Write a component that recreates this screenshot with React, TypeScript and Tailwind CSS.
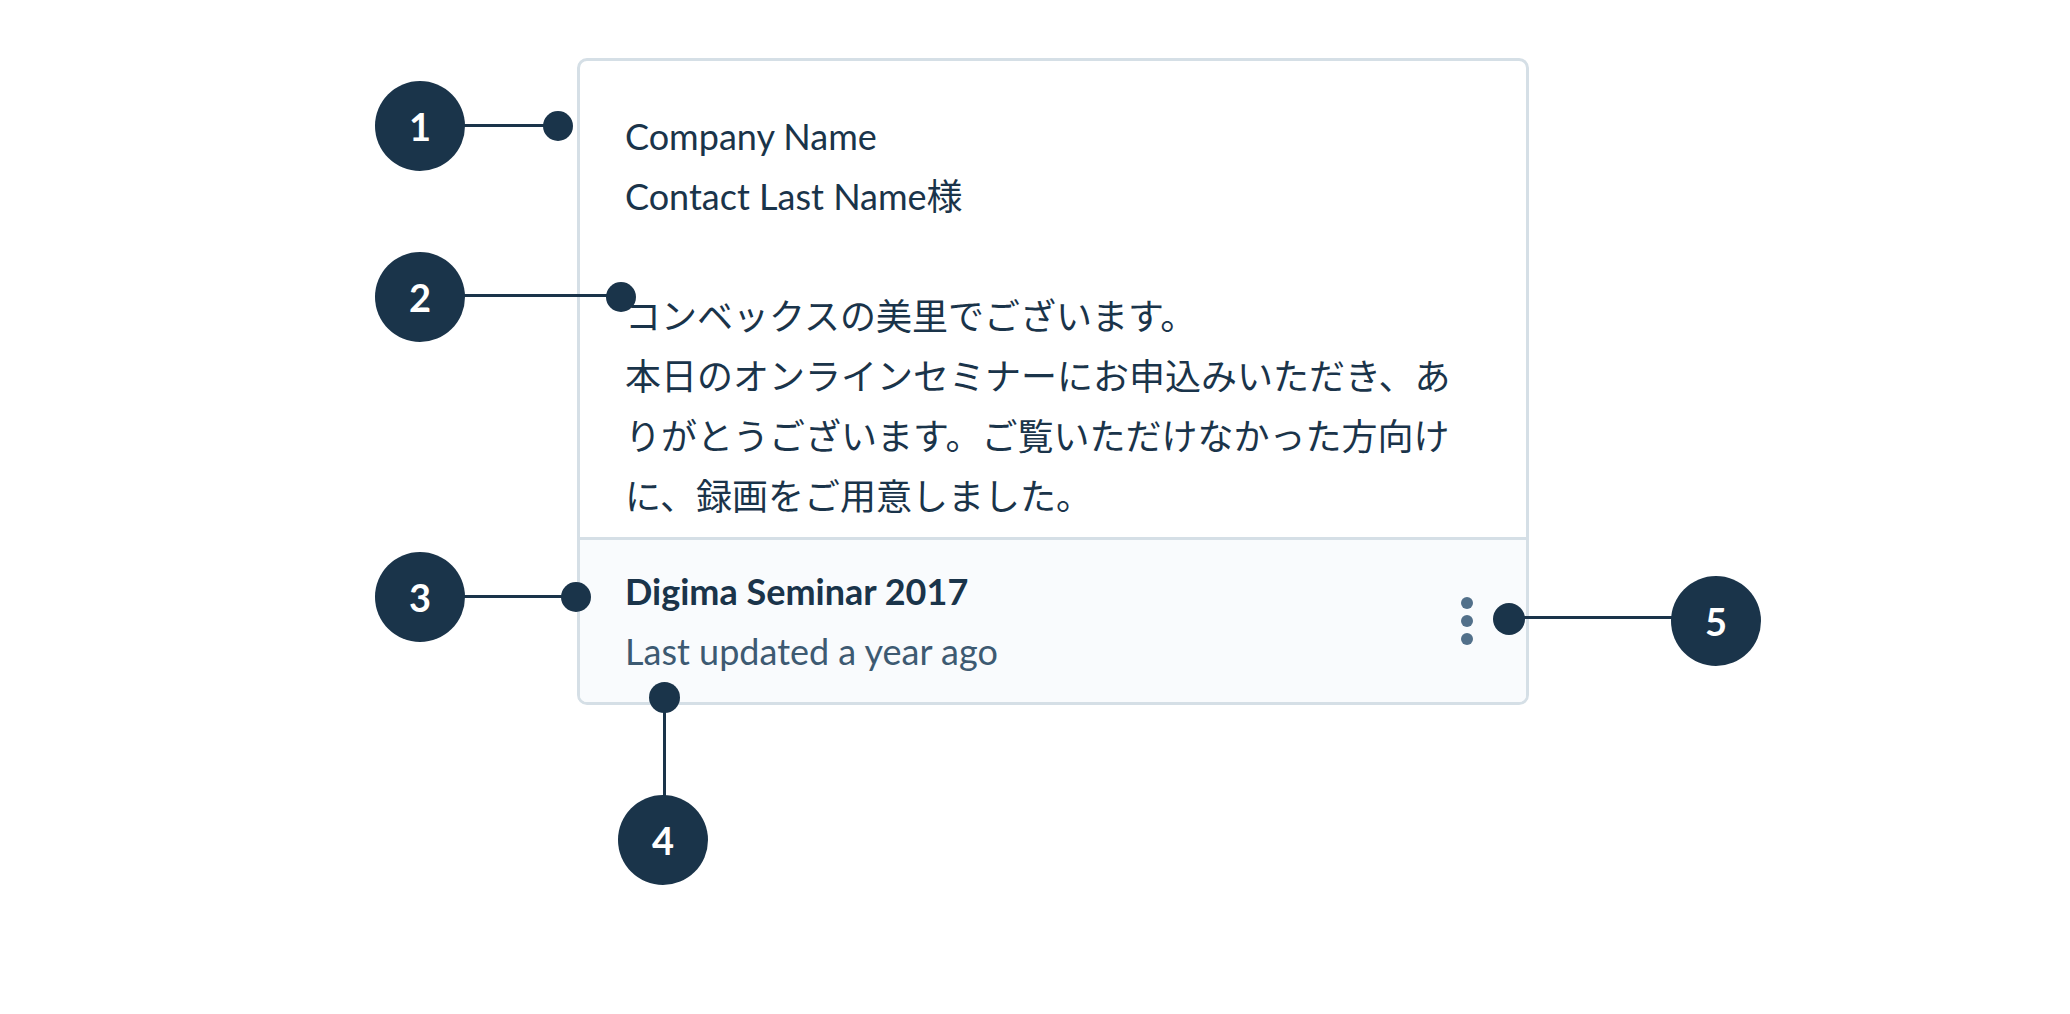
import React from "react";

function Badge({ n, x, y }: { n: number; x: number; y: number }) {
  return (
    <div
      className="absolute w-[90px] h-[90px] rounded-full bg-[#1a344a] text-white flex items-center justify-center text-[38px] font-bold font-['Lato'] leading-none"
      style={{ left: x - 45, top: y - 45 }}
    >
      {n}
    </div>
  );
}

function Dot({ x, y, d = 30 }: { x: number; y: number; d?: number }) {
  return (
    <div
      className="absolute rounded-full bg-[#1a344a]"
      style={{ left: x - d / 2, top: y - d / 2, width: d, height: d }}
    />
  );
}

function HLine({ x1, x2, y }: { x1: number; x2: number; y: number }) {
  return (
    <div
      className="absolute h-[3px] bg-[#1a344a]"
      style={{ left: x1, width: x2 - x1, top: y - 1.5 }}
    />
  );
}

function VLine({ y1, y2, x }: { y1: number; y2: number; x: number }) {
  return (
    <div
      className="absolute w-[3px] bg-[#1a344a]"
      style={{ top: y1, height: y2 - y1, left: x - 1.5 }}
    />
  );
}

export default function App() {
  return (
    <div className="relative w-[2070px] h-[1014px] bg-white font-['Lato','Noto_Sans_CJK_JP',sans-serif] overflow-hidden">
      <div className="pt-[58px] pl-[577px]">
        <div className="w-[952px] rounded-[10px] border-[3px] border-[#d5dfe6] overflow-hidden">
          <div className="pt-[45px] pb-[11px] px-[45px] text-[36px] leading-[60px] text-[#1a344a] font-['Lato','Noto_Sans_CJK_JP',sans-serif] whitespace-nowrap">
            Company Name
            <br />
            Contact Last Name様
            <br />
            <br />
            コンベックスの美里でございます。
            <br />
            本日のオンラインセミナーにお申込みいただき、あ
            <br />
            りがとうございます。ご覧いただけなかった方向け
            <br />
            に、録画をご用意しました。
          </div>
          <div className="border-t-[3px] border-[#d5dfe6] bg-[#f9fbfd] flex items-center pl-[45px] pr-[53px] py-[21px]">
            <div className="text-[36px] leading-[60px]">
              <div className="font-bold text-[#1a344a]">Digima Seminar 2017</div>
              <div className="text-[#3d5a72]">Last updated a year ago</div>
            </div>
            <div className="ml-auto flex flex-col gap-[6px]">
              <div className="w-[12px] h-[12px] rounded-full bg-[#52708a]" />
              <div className="w-[12px] h-[12px] rounded-full bg-[#52708a]" />
              <div className="w-[12px] h-[12px] rounded-full bg-[#52708a]" />
            </div>
          </div>
        </div>
      </div>

      {/* callout 1 */}
      <HLine x1={460} x2={550} y={125} />
      <Dot x={558} y={126} />
      <Badge n={1} x={420} y={126} />

      {/* callout 2 */}
      <HLine x1={460} x2={612} y={295} />
      <Dot x={621} y={297} />
      <Badge n={2} x={420} y={297} />

      {/* callout 3 */}
      <HLine x1={460} x2={568} y={596} />
      <Dot x={576} y={597} />
      <Badge n={3} x={420} y={597} />

      {/* callout 4 */}
      <VLine x={664} y1={700} y2={800} />
      <Dot x={664} y={697} d={31} />
      <Badge n={4} x={663} y={840} />

      {/* callout 5 */}
      <HLine x1={1520} x2={1680} y={617} />
      <Dot x={1509} y={619} d={32} />
      <Badge n={5} x={1716} y={621} />
    </div>
  );
}
